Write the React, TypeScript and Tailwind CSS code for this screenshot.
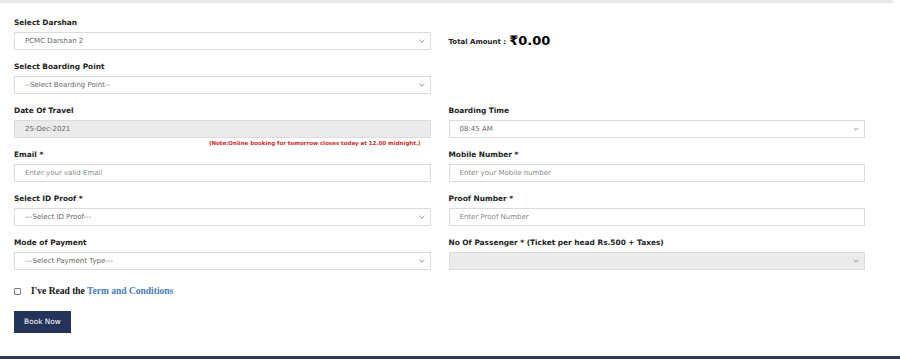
const font = "font-['DejaVu_Sans',Verdana,sans-serif]";

function Chevron() {
  return (
    <svg className="w-[6px] h-[4px] text-[#888]" viewBox="0 0 10 6" fill="none" stroke="currentColor" strokeWidth="1.5">
      <path d="M1 1l4 4 4-4" />
    </svg>
  );
}

function Label({ children }: { children: React.ReactNode }) {
  return <div className="h-[12px] leading-[12px] mb-[3px] text-[7.4px] font-bold text-[#222]">{children}</div>;
}

function SelectBox({ value, disabled }: { value?: string; disabled?: boolean }) {
  return (
    <div
      className={`h-[18px] border border-[#dcdcdc] flex items-center justify-between pl-[10px] pr-[5px] text-[7px] text-[#666] ${
        disabled ? "bg-[#ebebeb]" : "bg-white"
      }`}
    >
      <span>{value}</span>
      <Chevron />
    </div>
  );
}

function InputBox({ placeholder, value, disabled }: { placeholder?: string; value?: string; disabled?: boolean }) {
  return (
    <div
      className={`h-[18px] border border-[#dcdcdc] flex items-center pl-[10px] text-[7px] ${
        disabled ? "bg-[#ebebeb] text-[#666]" : "bg-white text-[#888]"
      }`}
    >
      {value ?? placeholder}
    </div>
  );
}

export default function App() {
  return (
    <div className={`w-[900px] h-[359px] bg-white flex flex-col ${font}`}>
      <div className="h-[3px] w-[893px] bg-[#e8e8e8]" />
      <div className="flex-1 px-[14px] pt-[14px]">
        <div className="grid grid-cols-2 gap-x-[18px] w-[851px]">
          <div className="pb-[11px]">
            <Label>Select Darshan</Label>
            <SelectBox value="PCMC Darshan 2" />
          </div>
          <div className="pb-[11px] flex flex-col">
            <div className="h-[15px]" />
            <div className="h-[18px] flex items-center gap-[3px]">
              <span className="text-[7px] font-bold text-[#222] mt-[2px]">Total Amount :</span>
              <span className="text-[13px] font-bold text-black">₹0.00</span>
            </div>
          </div>

          <div className="pb-[11px]">
            <Label>Select Boarding Point</Label>
            <SelectBox value="--Select Boarding Point--" />
          </div>
          <div />

          <div>
            <Label>Date Of Travel</Label>
            <InputBox value="25-Dec-2021" disabled />
            <div className="h-[11px] leading-[11px] text-right pr-[10px] text-[5.5px] font-bold text-[#d02a2a]">
              (Note:Online booking for tomorrow closes today at 12.00 midnight.)
            </div>
          </div>
          <div className="pb-[11px]">
            <Label>Boarding Time</Label>
            <SelectBox value="08:45 AM" />
          </div>

          <div className="pb-[11px]">
            <Label>Email *</Label>
            <InputBox placeholder="Enter your valid Email" />
          </div>
          <div className="pb-[11px]">
            <Label>Mobile Number *</Label>
            <InputBox placeholder="Enter your Mobile number" />
          </div>

          <div className="pb-[11px]">
            <Label>Select ID Proof *</Label>
            <SelectBox value="---Select ID Proof---" />
          </div>
          <div className="pb-[11px]">
            <Label>Proof Number *</Label>
            <InputBox placeholder="Enter Proof Number" />
          </div>

          <div className="pb-[11px]">
            <Label>Mode of Payment</Label>
            <SelectBox value="---Select Payment Type---" />
          </div>
          <div className="pb-[11px]">
            <Label>No Of Passenger * (Ticket per head Rs.500 + Taxes)</Label>
            <SelectBox disabled />
          </div>
        </div>

        <div className="mt-[3px] flex items-center h-[14px]">
          <span className="w-[7px] h-[7px] border border-[#777] rounded-[1px] bg-white" />
          <span className="ml-[10px] font-['Liberation_Serif',serif] text-[9.5px] font-bold text-[#111]">
            I've Read the <span className="text-[#4a7ab5]">Term and Conditions</span>
          </span>
        </div>

        <button className="mt-[13px] w-[57px] h-[22px] bg-[#24335a] text-white text-[7.4px] flex items-center justify-center">
          Book Now
        </button>
      </div>
      <div className="h-[3px] bg-[#2c3a58]" />
    </div>
  );
}
